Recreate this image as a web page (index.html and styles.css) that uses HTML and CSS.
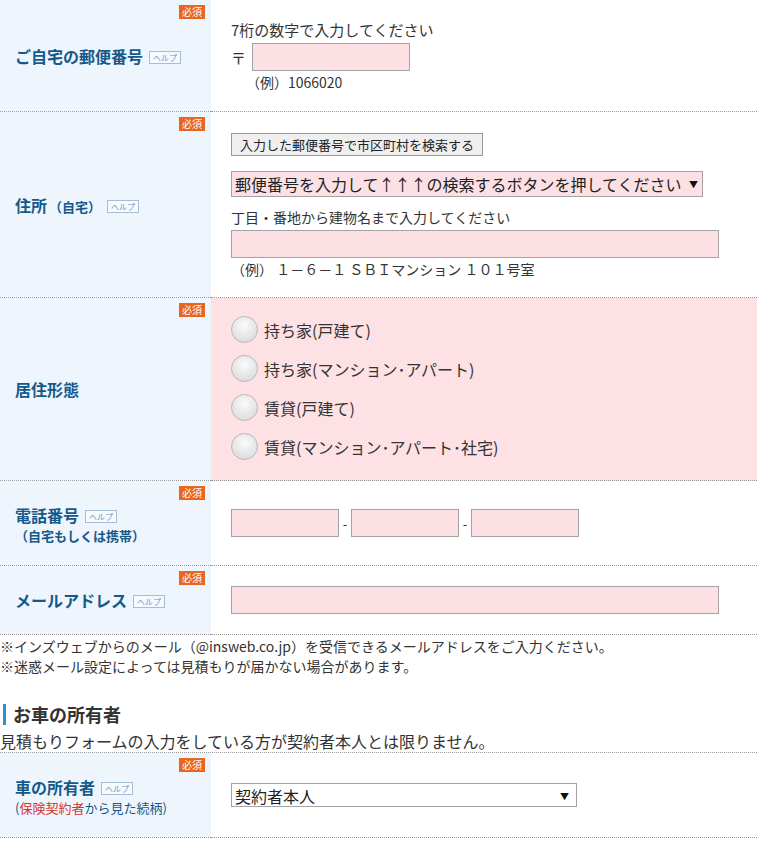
FILE: index.html
```html
<!DOCTYPE html>
<html lang="ja">
<head>
  <meta charset="UTF-8">
  <meta name="viewport" content="width=device-width, initial-scale=1.0">
  <title>お見積りフォーム</title>
  <link rel="stylesheet" href="styles.css">
</head>
<body>
  <table class="form-table">
    <tr class="row-zip">
      <th>
        <span class="req">必須</span>
        <span class="label">ご自宅の郵便番号</span><span class="help">ヘルプ</span>
      </th>
      <td>
        <p class="hint hint-lg">7桁の数字で入力してください</p>
        <div class="zip-row">
          <span class="zip-mark">〒</span>
          <input type="text" class="field field-zip">
        </div>
        <p class="example example-zip">（例）1066020</p>
      </td>
    </tr>
    <tr class="row-address">
      <th>
        <span class="req">必須</span>
        <span class="label">住所</span><span class="label-sub">（自宅）</span><span class="help">ヘルプ</span>
      </th>
      <td>
        <button type="button" class="btn-search">入力した郵便番号で市区町村を検索する</button>
        <div class="select-wrap select-city">
          <select class="select select-pink">
            <option>郵便番号を入力して↑↑↑の検索するボタンを押してください</option>
          </select>
        </div>
        <p class="hint">丁目・番地から建物名まで入力してください</p>
        <input type="text" class="field field-wide">
        <p class="example">（例） １－６－１ ＳＢＩマンション １０１号室</p>
      </td>
    </tr>
    <tr class="row-house">
      <th>
        <span class="req">必須</span>
        <span class="label">居住形態</span>
      </th>
      <td class="cell-pink">
        <label class="radio"><input type="radio" name="house"><span>持ち家(戸建て)</span></label>
        <label class="radio"><input type="radio" name="house"><span>持ち家(マンション･アパート)</span></label>
        <label class="radio"><input type="radio" name="house"><span>賃貸(戸建て)</span></label>
        <label class="radio"><input type="radio" name="house"><span>賃貸(マンション･アパート･社宅)</span></label>
      </td>
    </tr>
    <tr class="row-tel">
      <th>
        <span class="req">必須</span>
        <span class="label">電話番号</span><span class="help">ヘルプ</span>
        <span class="label-note">（自宅もしくは携帯）</span>
      </th>
      <td>
        <div class="tel-row">
          <input type="text" class="field field-tel">
          <span class="dash">-</span>
          <input type="text" class="field field-tel">
          <span class="dash">-</span>
          <input type="text" class="field field-tel">
        </div>
      </td>
    </tr>
    <tr class="row-mail">
      <th>
        <span class="req">必須</span>
        <span class="label">メールアドレス</span><span class="help">ヘルプ</span>
      </th>
      <td>
        <input type="text" class="field field-wide">
      </td>
    </tr>
  </table>

  <div class="notes">
    <p>※インズウェブからのメール（@insweb.co.jp）を受信できるメールアドレスをご入力ください。</p>
    <p>※迷惑メール設定によっては見積もりが届かない場合があります。</p>
  </div>

  <h2 class="section-title">お車の所有者</h2>
  <p class="section-lead">見積もりフォームの入力をしている方が契約者本人とは限りません。</p>

  <table class="form-table">
    <tr class="row-owner">
      <th>
        <span class="req">必須</span>
        <span class="label">車の所有者</span><span class="help">ヘルプ</span>
        <span class="label-rel">(<em>保険契約者</em>から見た続柄)</span>
      </th>
      <td>
        <div class="select-wrap select-owner">
          <select class="select">
            <option>契約者本人</option>
            <option>配偶者</option>
            <option>同居の親族</option>
            <option>その他</option>
          </select>
        </div>
      </td>
    </tr>
  </table>
</body>
</html>
```

FILE: styles.css
```css
body {
  font-family: "Noto Sans CJK JP", "Noto Sans", sans-serif;
  color: #333;
  margin: 0;
  padding: 0;
  width: 757px;
}
p {
  margin: 0;
}

/* form rows */
.form-table {
  width: 100%;
  border-collapse: collapse;
}
.form-table tr {
  border-bottom: 1px dotted #999;
}
.form-table th {
  position: relative;
  box-sizing: border-box;
  width: 211px;
  padding: 0 10px 0 15px;
  background-color: #eef5fc;
  text-align: left;
  vertical-align: middle;
  font-weight: bold;
  color: #15598a;
}
.form-table td {
  padding: 20px;
  vertical-align: top;
}
.label {
  font-size: 16px;
}
.label-sub {
  font-size: 13px;
  margin-left: 2px;
}
.label-note {
  display: block;
  font-size: 13px;
  line-height: 17px;
}
.label-rel {
  display: block;
  font-size: 13px;
  line-height: 17px;
  font-weight: normal;
}
.label-rel em {
  font-style: normal;
  color: #d8312e;
}
.req {
  position: absolute;
  top: 5px;
  right: 6px;
  padding: 0 3px;
  background-color: #e8661e;
  color: #fff;
  font-size: 10px;
  line-height: 14px;
  font-weight: normal;
}
.help {
  display: inline-block;
  margin-left: 6px;
  padding: 0 3px;
  border: 1px solid #a7bcd6;
  background-color: #f6f9fd;
  color: #6f93c4;
  font-size: 8px;
  line-height: 11px;
  font-weight: normal;
  vertical-align: 2px;
}

/* inputs */
.field {
  box-sizing: border-box;
  height: 28px;
  border: 1px solid #a3a3a3;
  background-color: #fde0e3;
  font-size: 15px;
  padding: 2px 4px;
}
.field-zip {
  width: 158px;
}
.field-wide {
  display: block;
  width: 488px;
  margin-top: 3px;
}
.field-tel {
  width: 108px;
}
.hint {
  font-size: 14px;
  line-height: 20px;
  margin-top: 10px;
}
.hint-lg {
  font-size: 15px;
  margin-top: 0;
}
.example {
  font-size: 14px;
  line-height: 18px;
  margin-top: 2px;
}
.example-zip {
  padding-left: 15px;
}
.zip-row {
  display: flex;
  align-items: center;
  gap: 6px;
  margin-top: 3px;
}
.zip-mark {
  font-size: 15px;
}
.btn-search {
  display: block;
  height: 23px;
  padding: 0 8px;
  border: 1px solid #999;
  border-radius: 0;
  background-color: #efefef;
  color: #222;
  font-family: inherit;
  font-size: 13px;
}
.select-wrap {
  position: relative;
  margin-top: 15px;
}
.select-wrap::after {
  content: "▼";
  position: absolute;
  top: 50%;
  transform: translateY(-50%);
  font-size: 9px;
  color: #111;
  pointer-events: none;
}
.select {
  box-sizing: border-box;
  appearance: none;
  -webkit-appearance: none;
  width: 100%;
  border: 1px solid #a3a3a3;
  border-radius: 0;
  background-color: #fff;
  color: #222;
  font-family: inherit;
  font-size: 16px;
  padding: 0 20px 0 3px;
}
.select-pink {
  background-color: #fde0e3;
}
.select-city {
  width: 472px;
}
.select-city::after {
  right: 5px;
}
.select-city .select {
  height: 26px;
}
.select-owner {
  width: 346px;
  margin-top: 0;
}
.select-owner::after {
  right: 8px;
}
.select-owner .select {
  height: 24px;
}

/* radio list */
.cell-pink {
  background-color: #fde1e4;
}
.row-house td {
  padding-top: 12px;
  padding-bottom: 14px;
}
.radio {
  display: flex;
  align-items: center;
  height: 39px;
  font-size: 16px;
  color: #333;
}
.radio input {
  appearance: none;
  -webkit-appearance: none;
  box-sizing: border-box;
  width: 27px;
  height: 27px;
  margin: 0 6px 0 0;
  border: 1px solid #b8b8b8;
  border-radius: 50%;
  background: radial-gradient(circle at 50% 35%, #fbfbfb 0%, #e6e6e6 55%, #d6d6d6 100%);
}

/* rows */
.row-zip td {
  padding-top: 20px;
  padding-bottom: 20px;
}
.row-address td {
  padding-top: 21px;
  padding-bottom: 19px;
}
.row-tel td {
  padding-top: 28px;
  padding-bottom: 28px;
}
.tel-row {
  display: flex;
  align-items: center;
}
.dash {
  width: 12px;
  text-align: center;
  font-size: 13px;
}
.row-mail td {
  padding-top: 20px;
  padding-bottom: 20px;
}
.row-mail .field-wide {
  margin-top: 0;
}
.row-owner td {
  padding-top: 30px;
  padding-bottom: 29px;
}

/* notes and section */
.notes {
  margin-top: 1px;
  font-size: 14px;
  line-height: 20px;
}
.section-title {
  margin: 28px 0 0 3px;
  padding-left: 7px;
  border-left: 3px solid #2b8fd1;
  font-size: 18px;
  line-height: 21px;
  color: #333;
}
.section-lead {
  margin-top: 5px;
  font-size: 16px;
  line-height: 22px;
  border-bottom: 1px dotted #999;
}
```
